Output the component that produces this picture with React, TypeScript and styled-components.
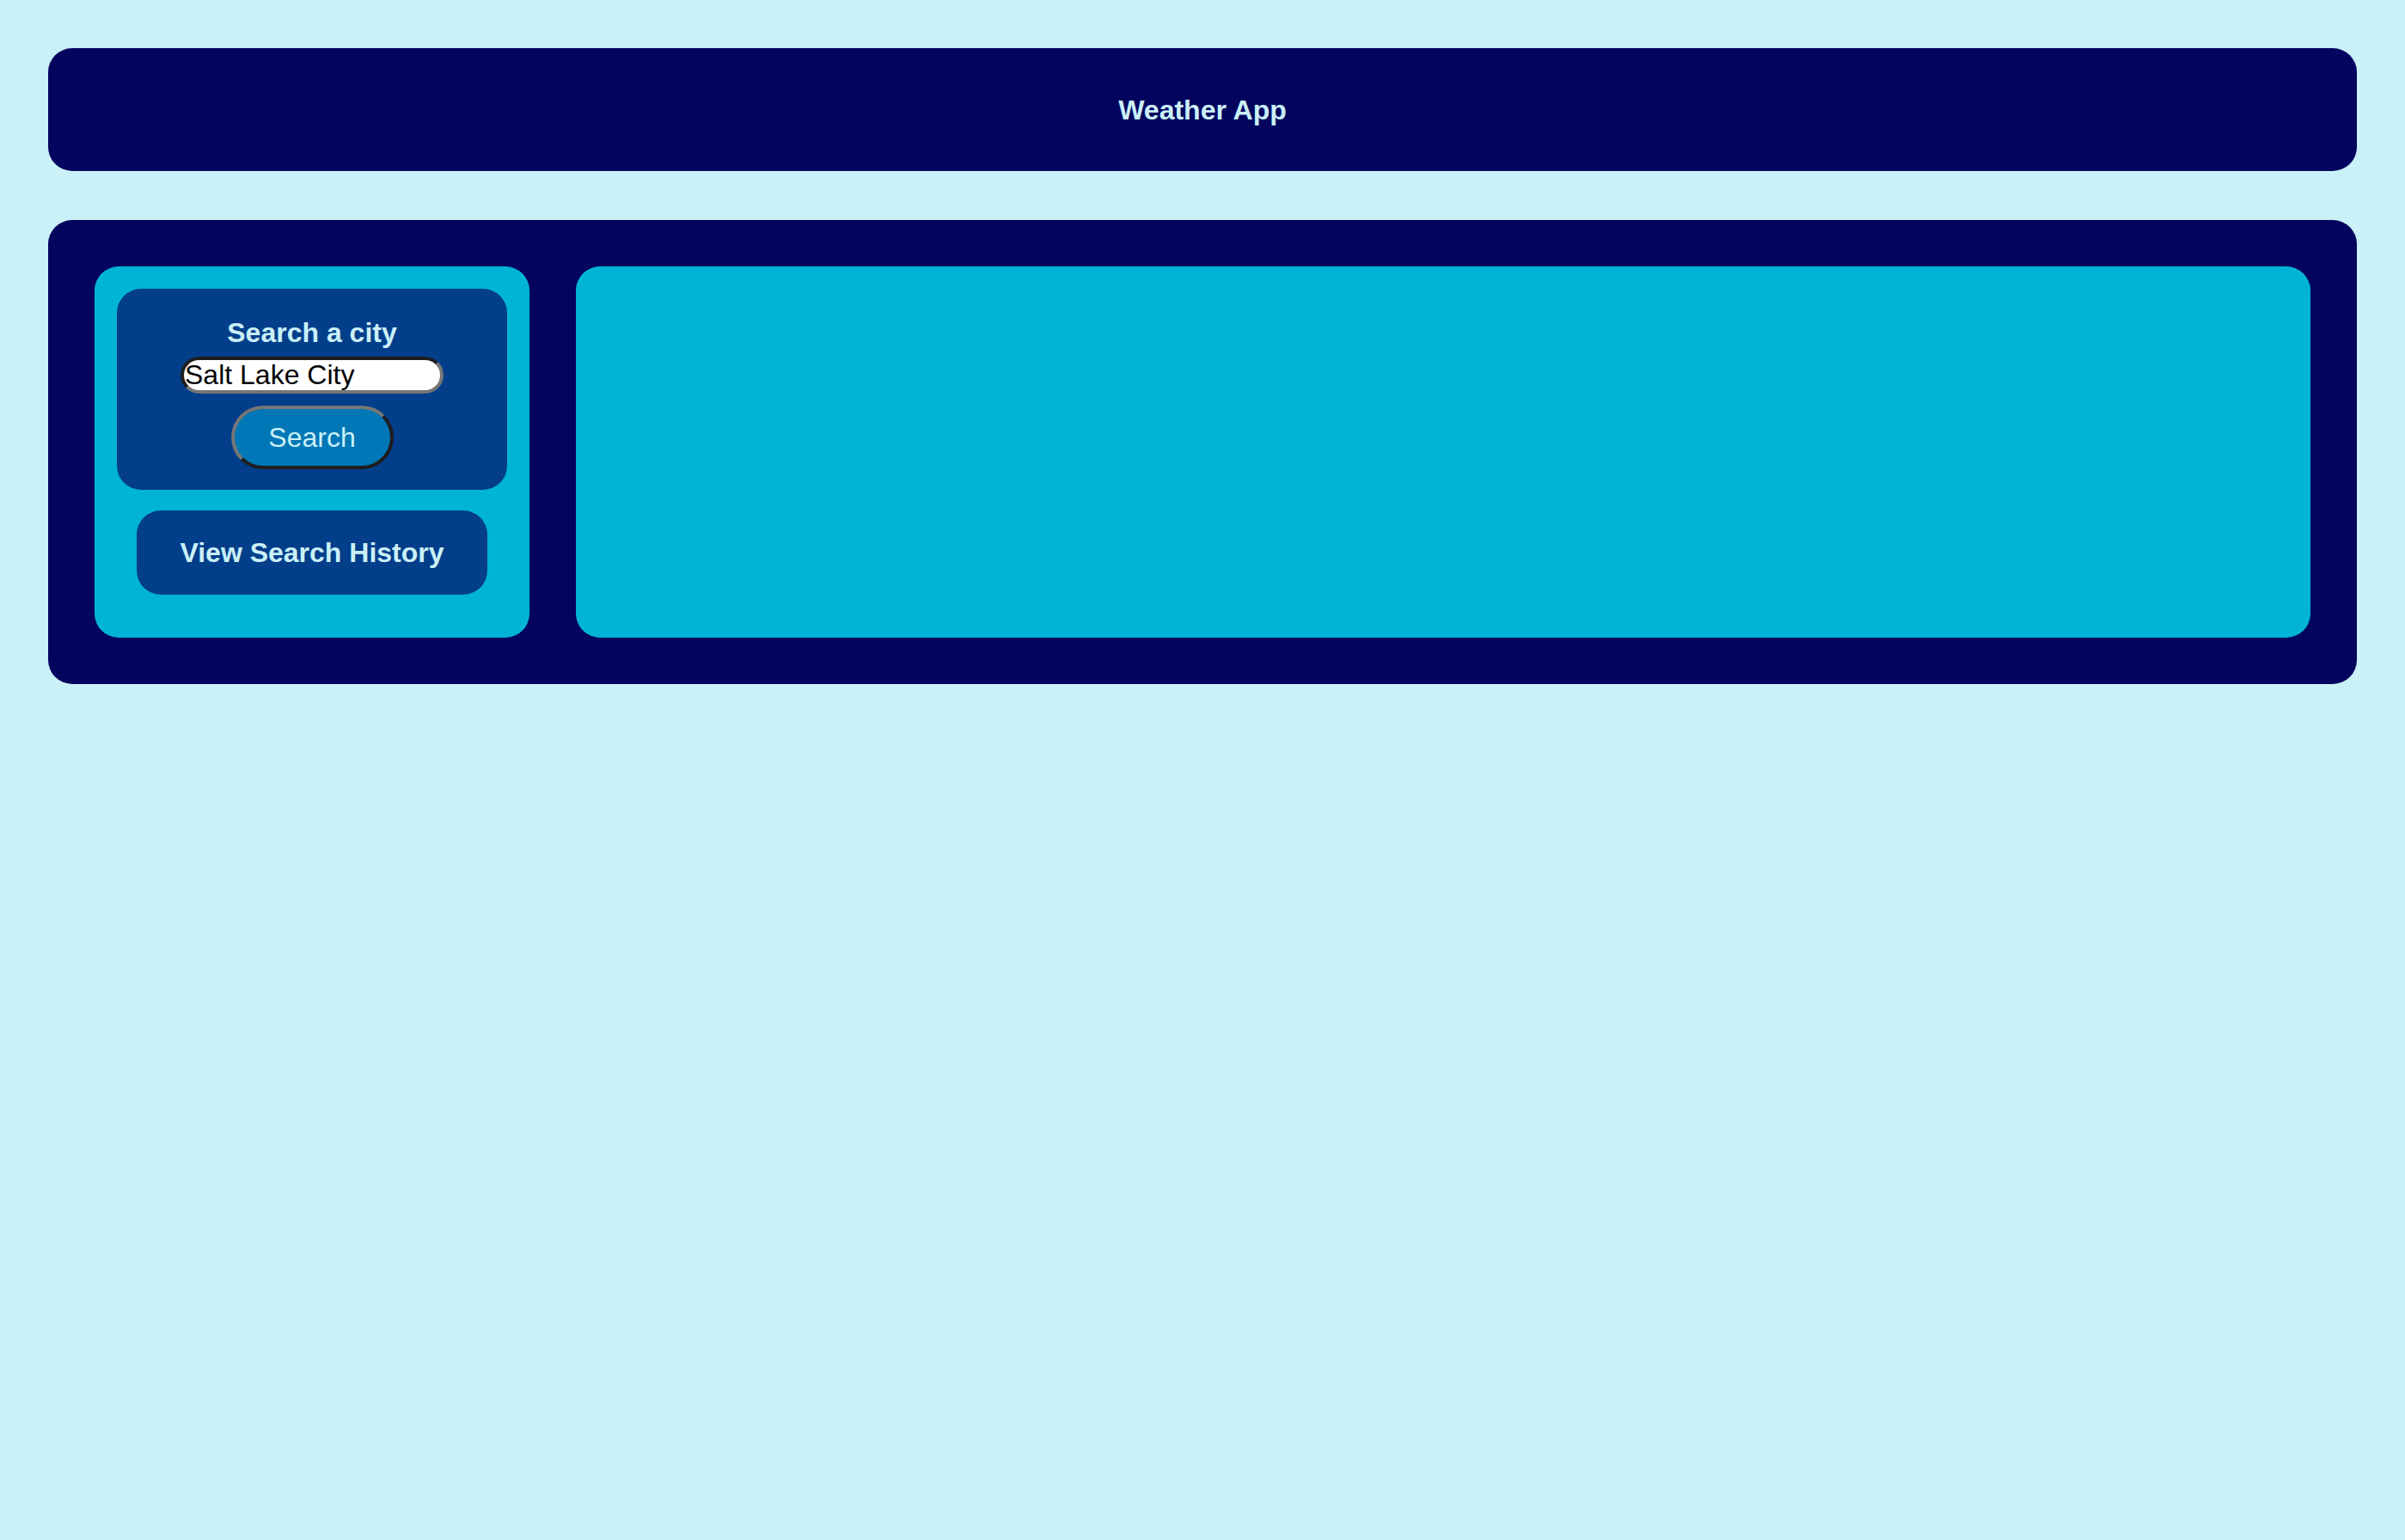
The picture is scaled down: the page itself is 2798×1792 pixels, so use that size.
import React, { useState } from 'react';
import styled, { createGlobalStyle } from 'styled-components';

const colors = {
  navy: '#03045e',
  blue: '#023e8a',
  ocean: '#0077b6',
  sky: '#00b4d8',
  light: '#caf0f8',
};

const GlobalStyle = createGlobalStyle`
  body {
    margin: 0;
    background-color: ${colors.light};
    font-family: 'Liberation Sans', Arial, sans-serif;
  }
`;

const App = () => {
  const [city, setCity] = useState('Salt Lake City');

  return (
    <>
      <GlobalStyle />
      <Page>
        <Header>
          <Title>Weather App</Title>
        </Header>
        <Main>
          <Sidebar>
            <SearchCard>
              <SearchTitle>Search a city</SearchTitle>
              <CityInput
                type="text"
                value={city}
                onChange={e => setCity(e.target.value)}
              />
              <SearchButton type="button">Search</SearchButton>
            </SearchCard>
            <HistoryButton type="button">View Search History</HistoryButton>
          </Sidebar>
          <WeatherPanel />
        </Main>
      </Page>
    </>
  );
};

export default App;

const Page = styled.div`
  display: flex;
  flex-direction: column;
  gap: 57px;
  padding: 56px;
`;

const Header = styled.header`
  display: flex;
  align-items: center;
  justify-content: center;
  height: 143px;
  border-radius: 28px;
  background-color: ${colors.navy};
`;

const Title = styled.h1`
  margin: 0;
  font-size: 32px;
  line-height: 36px;
  font-weight: 700;
  color: ${colors.light};
`;

const Main = styled.main`
  display: flex;
  gap: 54px;
  padding: 54px;
  border-radius: 28px;
  background-color: ${colors.navy};
`;

const Sidebar = styled.aside`
  display: flex;
  flex-direction: column;
  align-items: center;
  gap: 24px;
  width: 506px;
  box-sizing: border-box;
  padding: 26px 26px 50px;
  border-radius: 28px;
  background-color: ${colors.sky};
`;

const SearchCard = styled.div`
  display: flex;
  flex-direction: column;
  align-items: center;
  align-self: stretch;
  height: 234px;
  box-sizing: border-box;
  padding-top: 33px;
  border-radius: 28px;
  background-color: ${colors.blue};
`;

const SearchTitle = styled.h3`
  margin: 0 0 10px;
  font-size: 32px;
  line-height: 36px;
  font-weight: 700;
  color: ${colors.light};
`;

const CityInput = styled.input`
  width: 306px;
  height: 43px;
  box-sizing: border-box;
  margin: 0 0 14px;
  padding: 0 1px;
  border: 4px solid;
  border-color: #1e1e1e #767676 #767676 #1e1e1e;
  border-radius: 22px;
  background-color: #fff;
  font-family: 'Liberation Sans', Arial, sans-serif;
  font-size: 32px;
  color: #000;
  outline: none;
`;

const SearchButton = styled.button`
  width: 189px;
  height: 74px;
  padding: 0;
  border: 4px solid;
  border-color: #767676 #1e1e1e #1e1e1e #767676;
  border-radius: 37px;
  background-color: ${colors.ocean};
  font-family: 'Liberation Sans', Arial, sans-serif;
  font-size: 32px;
  color: ${colors.light};
  cursor: pointer;
`;

const HistoryButton = styled.button`
  width: 408px;
  height: 98px;
  padding: 0;
  border: none;
  border-radius: 28px;
  background-color: ${colors.blue};
  font-family: 'Liberation Sans', Arial, sans-serif;
  font-size: 32px;
  font-weight: 700;
  color: ${colors.light};
  cursor: pointer;
`;

const WeatherPanel = styled.section`
  flex: 1;
  min-height: 432px;
  border-radius: 28px;
  background-color: ${colors.sky};
`;
